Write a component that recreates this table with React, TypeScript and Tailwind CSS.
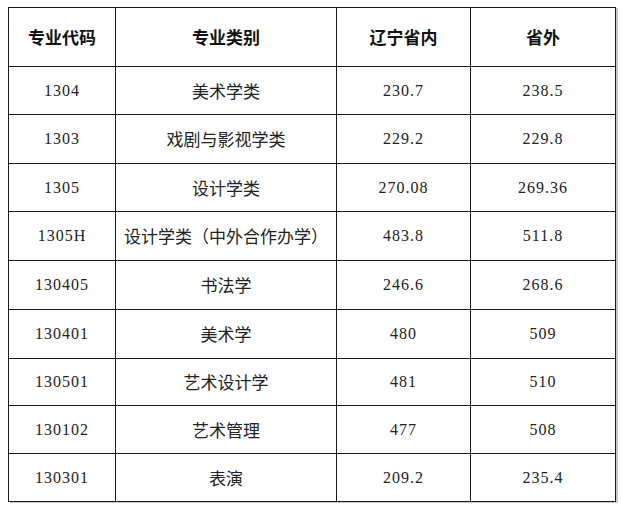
const rows: [string, string, string, string, string][] = [
  ["1304", "美术学类", "230.7", "238.5", "h-[48px]"],
  ["1303", "戏剧与影视学类", "229.2", "229.8", "h-[49px]"],
  ["1305", "设计学类", "270.08", "269.36", "h-[48px]"],
  ["1305H", "设计学类（中外合作办学）", "483.8", "511.8", "h-[49px]"],
  ["130405", "书法学", "246.6", "268.6", "h-[49px]"],
  ["130401", "美术学", "480", "509", "h-[49px]"],
  ["130501", "艺术设计学", "481", "510", "h-[47px]"],
  ["130102", "艺术管理", "477", "508", "h-[48px]"],
  ["130301", "表演", "209.2", "235.4", "h-[47px]"],
];

const cjk = "font-['Noto_Sans_CJK_SC',sans-serif]";
const num = "font-['Liberation_Serif','Noto_Sans_CJK_SC',serif] text-[16px] tracking-[1px]";

export default function App() {
  return (
    <div className="h-[509px] w-[622px] bg-white pl-[8px] pt-[7px]">
      <div className="w-[608px] border border-[#1a1a1a] text-[#222] shadow-[2px_1px_0_#c8c8c8]">
        {/* header */}
        <div className={`grid h-[59px] grid-cols-[107px_221px_134px_1fr] border-b border-[#1a1a1a] text-[17px] font-bold text-[#111] ${cjk}`}>
          <div className="flex items-center justify-center border-r border-[#1a1a1a]">专业代码</div>
          <div className="flex items-center justify-center border-r border-[#1a1a1a]">专业类别</div>
          <div className="flex items-center justify-center border-r border-[#1a1a1a]">辽宁省内</div>
          <div className="flex items-center justify-center">省外</div>
        </div>
        {rows.map(([code, name, inside, outside, h], i) => (
          <div
            key={code}
            className={`grid grid-cols-[107px_221px_134px_1fr] ${h} ${i < rows.length - 1 ? "border-b border-[#1a1a1a]" : ""}`}
          >
            <div className={`flex items-center justify-center border-r border-[#1a1a1a] ${num}`}>{code}</div>
            <div className={`flex items-center justify-center border-r border-[#1a1a1a] text-[17px] ${cjk}`}>{name}</div>
            <div className={`flex items-center justify-center border-r border-[#1a1a1a] ${num}`}>{inside}</div>
            <div className={`flex items-center justify-center ${num}`}>{outside}</div>
          </div>
        ))}
      </div>
    </div>
  );
}
